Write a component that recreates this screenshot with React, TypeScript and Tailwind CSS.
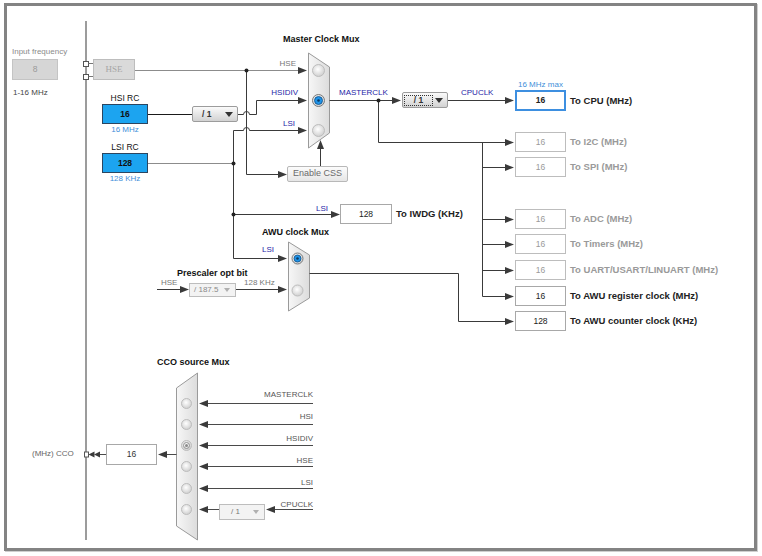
import React from "react";

type Dir = "r" | "l" | "u";

function Tri({ x, y, d, c = "#3a3a3a", L = 9, H = 3.5 }: { x: number; y: number; d: Dir; c?: string; L?: number; H?: number }) {
  let pts = "";
  if (d === "r") pts = `${x},${y} ${x - L},${y - H} ${x - L},${y + H}`;
  else if (d === "l") pts = `${x},${y} ${x + L},${y - H} ${x + L},${y + H}`;
  else pts = `${x},${y} ${x - H},${y + L} ${x + H},${y + L}`;
  return <polygon points={pts} fill={c} />;
}

function Radio({ x, y, r = 5.5, sel }: { x: number; y: number; r?: number; sel?: "blue" | "gray" }) {
  return (
    <g>
      <circle cx={x} cy={y} r={r} fill="url(#rg)" stroke={sel === "blue" ? "#7a7a7a" : "#bdbdbd"} strokeWidth={1} />
      {sel === "blue" && (
        <>
          <circle cx={x} cy={y} r={r - 2} fill="#1f93e8" stroke="#0d4f88" strokeWidth={0.8} />
          <circle cx={x} cy={y} r={1.3} fill="#0a3963" />
        </>
      )}
      {sel === "gray" && (
        <>
          <circle cx={x} cy={y} r={r - 2} fill="none" stroke="#8a8a8a" strokeWidth={0.9} />
          <circle cx={x} cy={y} r={1.5} fill="#8a8a8a" />
        </>
      )}
    </g>
  );
}

function Caret({ light }: { light?: boolean }) {
  return light ? (
    <svg width="6" height="4" viewBox="0 0 6 4">
      <polygon points="0,0 6,0 3,4" fill="#b0b0b0" />
    </svg>
  ) : (
    <svg width="8" height="5" viewBox="0 0 8 5">
      <polygon points="0,0 8,0 4,5" fill="#333" />
    </svg>
  );
}

function OutRow({ value, label, kind, className = "" }: { value: string; label: string; kind: "cpu" | "off" | "on"; className?: string }) {
  const box =
    kind === "cpu"
      ? "h-[21px] border-2 border-[#3d8fe0] font-bold text-[#222]"
      : kind === "off"
      ? "h-[20px] border border-[#bdbdbd] text-[#9a9a9a]"
      : "h-[20px] border border-[#a8a8a8] text-[#222]";
  const txt = kind === "off" ? "text-[#9a9a9a]" : "text-[#222]";
  return (
    <div className={`flex items-center gap-[4px] ${className}`}>
      <div className={`w-[51px] bg-white flex items-center justify-center text-[8.5px] ${box}`}>{value}</div>
      <div className={`whitespace-nowrap leading-none text-[9.5px] font-bold ${txt}`}>{label}</div>
    </div>
  );
}

function RcBlock({ name, value, sub }: { name: string; value: string; sub: string }) {
  return (
    <div className="flex flex-col items-center w-[46px]">
      <div className="h-[11px] flex items-center whitespace-nowrap leading-none text-[8.5px] text-[#111]">{name}</div>
      <div className="w-[46px] h-[20px] bg-[#1ca4f0] border border-[#2b4560] flex items-center justify-center text-[8.5px] font-bold text-[#111]">{value}</div>
      <div className="h-[12px] flex items-center whitespace-nowrap leading-none text-[8px] text-[#3f8fd9]">{sub}</div>
    </div>
  );
}

export default function App() {
  const dark = "#3a3a3a";
  const gray = "#8c8c8c";
  const cco = [403.5, 424.5, 445.5, 466.5, 488.5];
  const outs = [167.5, 219.5, 244.5, 270.5, 296.5];
  const ccoLabels = ["MASTERCLK", "HSI", "HSIDIV", "HSE", "LSI", "CPUCLK"];
  return (
    <div className="relative w-[762px] h-[556px] bg-white overflow-hidden font-['Liberation_Sans',Arial,sans-serif] text-[#222]">
      {/* frame */}
      <div className="absolute left-[4px] top-[3px] w-[753px] h-[548px] border-[3px] border-[#838383] shadow-[1px_1px_0_#cfcfcf]" />

      <svg className="absolute left-0 top-0" width="762" height="556" viewBox="0 0 762 556">
        <defs>
          <radialGradient id="rg" cx="45%" cy="40%" r="60%">
            <stop offset="0%" stopColor="#ffffff" />
            <stop offset="100%" stopColor="#cfcfcf" />
          </radialGradient>
          <linearGradient id="mg" x1="0" y1="0" x2="1" y2="0">
            <stop offset="0%" stopColor="#f7f7f7" />
            <stop offset="100%" stopColor="#dcdcdc" />
          </linearGradient>
        </defs>

        <line x1="86" y1="21" x2="86" y2="540" stroke="#9c9c9c" strokeWidth="2" />

        <rect x="83.5" y="61.5" width="5" height="5" fill="#fff" stroke="#555" />
        <rect x="83.5" y="74.5" width="5" height="5" fill="#fff" stroke="#555" />
        <path d="M88.5,63.5 H93 M88.5,76.5 H93" stroke="#777" fill="none" />

        <path d="M135,70.5 H299" stroke={gray} fill="none" />
        <Tri x={307} y={70.5} d="r" />
        <path d="M148,114.5 H192" stroke="#1a1a1a" fill="none" />
        <path d="M238,114.5 H243.5 A3,3 0 0 1 249.5,114.5 H256.5 V100.5 H299" stroke={dark} fill="none" />
        <Tri x={307} y={100.5} d="r" />
        <path d="M246.5,70.5 V174.5 H279" stroke={dark} fill="none" />
        <Tri x={287} y={174.5} d="r" />
        <circle cx="246.5" cy="70.5" r="2" fill="#222" />
        <path d="M148,163.5 H233.5" stroke={gray} fill="none" />
        <path d="M233.5,130.5 H243.5 A3,3 0 0 1 249.5,130.5 H299" stroke={dark} fill="none" />
        <Tri x={307} y={130.5} d="r" />
        <path d="M233.5,130.5 V258.5 H278" stroke={dark} fill="none" />
        <Tri x={287} y={258.5} d="r" />
        <circle cx="233.5" cy="163.5" r="2" fill="#222" />
        <path d="M233.5,214.5 H332" stroke={dark} fill="none" />
        <Tri x={340} y={214.5} d="r" />
        <circle cx="233.5" cy="214.5" r="2" fill="#222" />
        <path d="M320.5,166 V149" stroke={dark} fill="none" />
        <Tri x={320.5} y={140} d="u" />

        <polygon points="308.5,53 329.5,67 329.5,133 308.5,148" fill="url(#mg)" stroke="#9a9a9a" />
        <Radio x={318.5} y={70.5} r={6} />
        <Radio x={318.5} y={100.5} r={6} sel="blue" />
        <Radio x={318.5} y={130.5} r={6} />

        <path d="M329.5,100.5 H393" stroke={dark} fill="none" />
        <Tri x={401} y={100.5} d="r" />
        <path d="M378.5,100.5 V142.5 H506" stroke={dark} fill="none" />
        <circle cx="378.5" cy="100.5" r="2" fill="#222" />
        <Tri x={514} y={142.5} d="r" />
        <path d="M448,100.5 H506" stroke={dark} fill="none" />
        <Tri x={514} y={100.5} d="r" />
        <path d="M482.5,142.5 V296.5" stroke={dark} fill="none" />
        {outs.map((y) => (
          <g key={y}>
            <path d={`M482.5,${y} H506`} stroke={dark} fill="none" />
            <Tri x={514} y={y} d="r" />
          </g>
        ))}

        <polygon points="288.5,242 309.5,255 309.5,298 288.5,311" fill="url(#mg)" stroke="#9a9a9a" />
        <Radio x={297.5} y={258.5} r={5.5} sel="blue" />
        <Radio x={297.5} y={290.5} r={5.5} />
        <path d="M309.5,273.5 H458.5 V321.5 H506" stroke={dark} fill="none" />
        <Tri x={514} y={321.5} d="r" />
        <path d="M157,289.5 H181" stroke={dark} fill="none" />
        <Tri x={189} y={289.5} d="r" />
        <path d="M236,289.5 H278" stroke={dark} fill="none" />
        <Tri x={287} y={289.5} d="r" />

        <polygon points="176.5,388 197.5,373 197.5,540 176.5,526" fill="url(#mg)" stroke="#9a9a9a" />
        <Radio x={186.5} y={403.5} r={5} />
        <Radio x={186.5} y={424.5} r={5} />
        <Radio x={186.5} y={445.5} r={5} sel="gray" />
        <Radio x={186.5} y={466.5} r={5} />
        <Radio x={186.5} y={488.5} r={5} />
        <Radio x={186.5} y={509.5} r={5} />
        {cco.map((y) => (
          <g key={y}>
            <path d={`M313,${y} H207`} stroke="#4a4a4a" fill="none" />
            <Tri x={199} y={y} d="l" />
          </g>
        ))}
        <path d="M313,509.5 H274" stroke="#4a4a4a" fill="none" />
        <Tri x={266} y={509.5} d="l" />
        <path d="M219,509.5 H207" stroke="#4a4a4a" fill="none" />
        <Tri x={199} y={509.5} d="l" />
        <path d="M176.5,454.5 H166" stroke="#4a4a4a" fill="none" />
        <Tri x={158} y={454.5} d="l" />
        <path d="M106,454.5 H99" stroke="#4a4a4a" fill="none" />
        <Tri x={94} y={454.5} d="l" L={6} H={3} />
        <Tri x={88.5} y={454.5} d="l" L={6} H={3} />
        <rect x="84.5" y="452" width="4" height="5" fill="#fff" stroke="#555" />
      </svg>

      {/* Input frequency block */}
      <div className="absolute left-[12px] top-[46px] flex flex-col items-start">
        <div className="h-[12px] mb-[1px] flex items-center whitespace-nowrap leading-none text-[8px] text-[#8a8a8a]">Input frequency</div>
        <div className="w-[46px] h-[21px] bg-[#d6d6d6] border border-[#c4c4c4] flex items-center justify-center text-[8.5px] text-[#9a9a9a]">8</div>
        <div className="mt-[7px] ml-[1px] h-[12px] flex items-center whitespace-nowrap leading-none text-[8px] text-[#444]">1-16 MHz</div>
      </div>

      {/* HSE box */}
      <div className="absolute left-[93px] top-[59px] w-[42px] h-[21px] bg-[#dadada] border border-[#bdbdbd] flex items-center justify-center font-['Liberation_Serif',serif] text-[9px] text-[#a6a6a6]">HSE</div>

      {/* RC oscillators */}
      <div className="absolute left-[102px] top-[93px] flex flex-col gap-[6px]">
        <RcBlock name="HSI RC" value="16" sub="16 MHz" />
        <RcBlock name="LSI RC" value="128" sub="128 KHz" />
      </div>

      {/* HSI divider */}
      <div className="absolute left-[192px] top-[106px] w-[46px] h-[16px] rounded-[2px] border border-[#9c9c9c] bg-linear-to-b from-[#fbfbfb] to-[#d2d2d2] flex items-center justify-between pl-[9px] pr-[4px] text-[8.5px] font-bold text-[#333]">
        <span>/ 1</span>
        <Caret />
      </div>

      {/* Master clock mux labels */}
      <div className="absolute left-[283px] top-[33px] h-[12px] flex items-center whitespace-nowrap leading-none text-[9px] font-bold text-[#111]">Master Clock Mux</div>
      <div className="absolute right-[466px] top-[58px] h-[12px] flex items-center whitespace-nowrap leading-none text-[8px] text-[#777]">HSE</div>
      <div className="absolute right-[464px] top-[87px] h-[12px] flex items-center whitespace-nowrap leading-none text-[8px] text-[#2626a8]">HSIDIV</div>
      <div className="absolute right-[467px] top-[118px] h-[12px] flex items-center whitespace-nowrap leading-none text-[8px] text-[#2626a8]">LSI</div>
      <div className="absolute left-[287px] top-[166px] w-[61px] h-[16px] rounded-[2px] border border-[#b8b8b8] bg-linear-to-b from-[#fcfcfc] to-[#e6e6e6] flex items-center justify-center text-[9px] text-[#6a6a6a]">Enable CSS</div>

      <div className="absolute left-[339px] top-[87px] h-[12px] flex items-center whitespace-nowrap leading-none text-[8px] text-[#2626a8]">MASTERCLK</div>
      <div className="absolute left-[461px] top-[87px] h-[12px] flex items-center whitespace-nowrap leading-none text-[8px] text-[#2626a8]">CPUCLK</div>

      {/* CPU divider */}
      <div className="absolute left-[402px] top-[92px] w-[46px] h-[16px] rounded-[2px] border border-[#9c9c9c] bg-linear-to-b from-[#fbfbfb] to-[#d2d2d2] flex items-center justify-between pl-[1px] pr-[4px] text-[8.5px] font-bold text-[#333]">
        <span className="w-[29px] h-[11px] border border-dotted border-[#333] flex items-center justify-center leading-none">/ 1</span>
        <Caret />
      </div>

      {/* output column */}
      <div className="absolute left-[518px] top-[79px] h-[12px] flex items-center whitespace-nowrap leading-none text-[8px] text-[#3f8fd9]">16 MHz max</div>
      <div className="absolute left-[515px] top-[90px] flex flex-col gap-[5px]">
        <OutRow value="16" label="To CPU (MHz)" kind="cpu" />
        <OutRow value="16" label="To I2C (MHz)" kind="off" className="mt-[16px]" />
        <OutRow value="16" label="To SPI (MHz)" kind="off" />
        <OutRow value="16" label="To ADC (MHz)" kind="off" className="mt-[27px]" />
        <OutRow value="16" label="To Timers (MHz)" kind="off" />
        <OutRow value="16" label="To UART/USART/LINUART (MHz)" kind="off" className="mt-[1px]" />
        <OutRow value="16" label="To AWU register clock (MHz)" kind="on" className="mt-[1px]" />
        <OutRow value="128" label="To AWU counter clock (KHz)" kind="on" />
      </div>

      {/* IWDG */}
      <div className="absolute right-[434px] top-[203px] h-[12px] flex items-center whitespace-nowrap leading-none text-[8px] text-[#2626a8]">LSI</div>
      <div className="absolute left-[340px] top-[204px] flex items-center gap-[4px]">
        <div className="w-[52px] h-[20px] bg-white border border-[#a8a8a8] flex items-center justify-center text-[8.5px] text-[#222]">128</div>
        <div className="whitespace-nowrap leading-none text-[9.5px] font-bold text-[#222]">To IWDG (KHz)</div>
      </div>

      {/* AWU */}
      <div className="absolute left-[262px] top-[226px] h-[12px] flex items-center whitespace-nowrap leading-none text-[9px] font-bold text-[#111]">AWU clock Mux</div>
      <div className="absolute left-[262px] top-[244px] h-[12px] flex items-center whitespace-nowrap leading-none text-[8px] text-[#2626a8]">LSI</div>
      <div className="absolute left-[177px] top-[267px] h-[12px] flex items-center whitespace-nowrap leading-none text-[9px] font-bold text-[#111]">Prescaler opt bit</div>
      <div className="absolute left-[161px] top-[277px] h-[12px] flex items-center whitespace-nowrap leading-none text-[8px] text-[#777]">HSE</div>
      <div className="absolute left-[244px] top-[277px] h-[12px] flex items-center whitespace-nowrap leading-none text-[8px] text-[#777]">128 KHz</div>
      <div className="absolute left-[189px] top-[283px] w-[47px] h-[14px] border border-[#bdbdbd] bg-[#f3f3f3] flex items-center justify-between pl-[4px] pr-[5px] text-[8px] text-[#8a8a8a]">
        <span>/ 187.5</span>
        <Caret light />
      </div>

      {/* CCO */}
      <div className="absolute left-[157px] top-[356px] h-[12px] flex items-center whitespace-nowrap leading-none text-[9px] font-bold text-[#111]">CCO source Mux</div>
      <div className="absolute right-[449px] top-[389px] flex flex-col items-end gap-[10px]">
        {ccoLabels.map((l) => (
          <div key={l} className="h-[12px] flex items-center whitespace-nowrap leading-none text-[8px] text-[#555]">{l}</div>
        ))}
      </div>
      <div className="absolute left-[219px] top-[504px] w-[46px] h-[16px] border border-[#bdbdbd] bg-[#f3f3f3] flex items-center justify-between pl-[11px] pr-[5px] text-[8px] text-[#777]">
        <span>/ 1</span>
        <Caret light />
      </div>
      <div className="absolute left-[32px] top-[448px] h-[12px] flex items-center whitespace-nowrap leading-none text-[8px] text-[#666]">(MHz) CCO</div>
      <div className="absolute left-[106px] top-[444px] w-[51px] h-[21px] bg-white border border-[#a8a8a8] flex items-center justify-center text-[8.5px] text-[#333]">16</div>
    </div>
  );
}
